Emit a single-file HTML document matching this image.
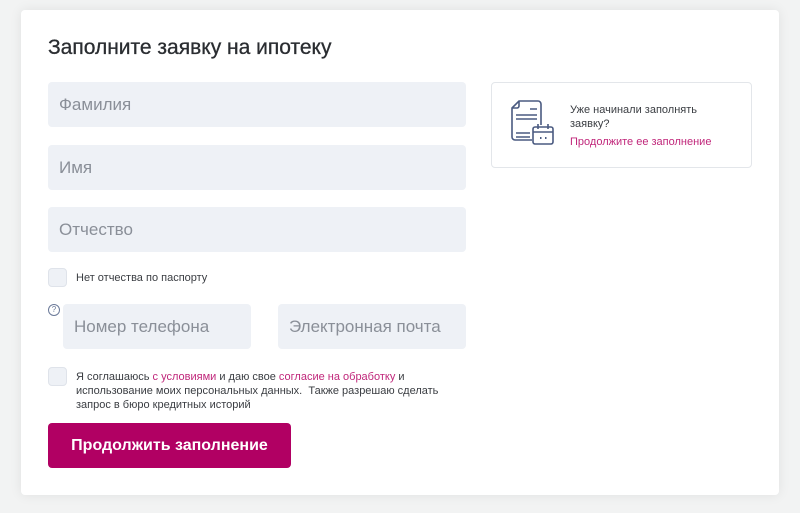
<!DOCTYPE html>
<html><head><meta charset="utf-8"><style>
body{margin:0;width:800px;height:513px;background:#f2f3f3;font-family:"Liberation Sans",sans-serif;position:relative;overflow:hidden}
.card{position:absolute;left:21px;top:10px;width:758px;height:485px;background:#fff;border-radius:4px;box-shadow:0 0 12px rgba(0,0,0,.08)}
.a{position:absolute}
h1{position:absolute;left:48px;top:36px;margin:0;font-size:21px;font-weight:normal;color:#2a2d31;-webkit-text-stroke:0.3px #2a2d31}
.in{position:absolute;background:#eef1f6;border-radius:4px;color:#8a8f98;font-size:17px;box-sizing:border-box;padding-left:11px;line-height:45px;height:45px}
.cb{position:absolute;width:19px;height:19px;border:1px solid #dfe3ea;background:#eef1f6;border-radius:4px;box-sizing:border-box}
.sm{font-size:11px;color:#3a3d42}
.pk{color:#c0267a}
</style></head><body>
<div class="card"></div>
<h1>Заполните заявку на ипотеку</h1>
<div class="in" style="left:48px;top:82px;width:418px">Фамилия</div>
<div class="in" style="left:48px;top:145px;width:418px">Имя</div>
<div class="in" style="left:48px;top:207px;width:418px">Отчество</div>
<div class="cb" style="left:48px;top:268px"></div>
<div class="a sm" style="left:76px;top:272px">Нет отчества по паспорту</div>
<div class="a" style="left:48px;top:304px;width:12px;height:12px;border:1px solid #6b7a99;border-radius:50%;box-sizing:border-box;font-size:8px;text-align:center;line-height:10px;color:#6b7a99">?</div>
<div class="in" style="left:63px;top:304px;width:188px">Номер телефона</div>
<div class="in" style="left:278px;top:304px;width:188px">Электронная почта</div>
<div class="cb" style="left:48px;top:367px"></div>
<div class="a sm" style="left:76px;top:370px;width:390px;line-height:14px">Я соглашаюсь <span class="pk">с условиями</span> и даю свое <span class="pk">согласие на обработку</span> и использование моих персональных данных.&nbsp; Также разрешаю сделать запрос в бюро кредитных историй</div>
<div class="a" style="left:48px;top:423px;width:243px;height:45px;background:#b10063;border-radius:4px;color:#fff;font-size:16px;font-weight:bold;text-align:center;line-height:45px">Продолжить заполнение</div>
<div class="a" style="left:491px;top:82px;width:261px;height:86px;border:1px solid #e3e6ea;border-radius:4px;box-sizing:border-box"></div>
<svg class="a" style="left:510px;top:100px" width="46" height="48" viewBox="0 0 46 48" fill="none" stroke="#4a5a80" stroke-width="1.6">
<path d="M31 25V4a3 3 0 0 0-3-3H9L2 8v29a3 3 0 0 0 3 3h17"/>
<path d="M9 1v5a2 2 0 0 1-2 2H2"/>
<path d="M20 9h7M6 15h21M6 19h21M6 33h14M6 37h14"/>
<rect x="23" y="27" width="20" height="17" rx="2" fill="#fff"/><path d="M23 32h20M28 24v5M38 24v5"/>
<path d="M30 38h1.5M35 38h1.5" stroke-width="2"/>
</svg>
<div class="a sm" style="left:570px;top:103px;line-height:14px;width:160px">Уже начинали заполнять заявку?</div>
<div class="a sm pk" style="left:570px;top:136px">Продолжите ее заполнение</div>
</body></html>
